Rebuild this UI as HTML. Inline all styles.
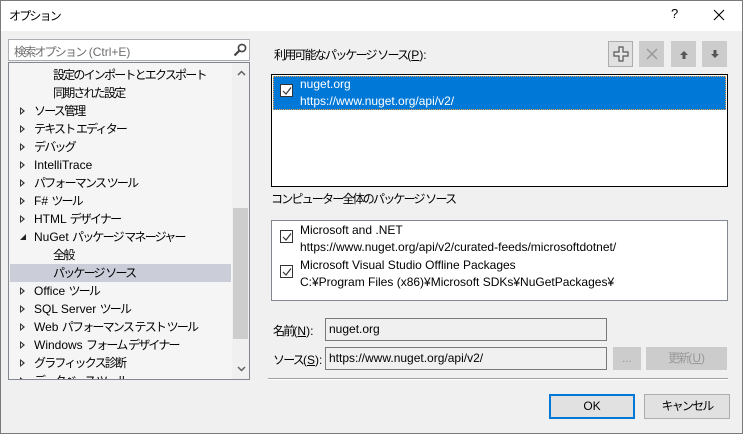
<!DOCTYPE html>
<html><head><meta charset="utf-8"><style>
*{box-sizing:border-box;margin:0;padding:0}
body{width:743px;height:434px;overflow:hidden;background:#f0f0f0;font-family:"Liberation Sans","Noto Sans CJK JP",sans-serif;font-size:12px;color:#000;position:relative}
.j{letter-spacing:-1.8px}
.win{position:absolute;left:0;top:0;width:743px;height:434px;border:1px solid #7a7a7a;border-top:none}
.title{position:absolute;left:0;top:0;width:743px;height:31px;background:#fff;border-top:1px solid #7a7a7a;border-left:1px solid #7a7a7a;border-right:1px solid #7a7a7a}
.abs{position:absolute;white-space:nowrap}
.box{position:absolute;border:1px solid #828790;background:#fff}
.tree{position:absolute;left:8px;top:62px;width:242px;height:318px;border:1px solid #828790;background:#f5f5f5;overflow:hidden}
.row{position:absolute;height:18px;line-height:18px;white-space:nowrap}
.tri{position:absolute;left:11px;top:5px;width:0;height:0;border-top:4px solid transparent;border-bottom:4px solid transparent;border-left:5px solid #333}
.tri:after{content:"";position:absolute;left:-4px;top:-2px;border-top:2px solid transparent;border-bottom:2px solid transparent;border-left:2px solid #f5f5f5}
.cb{position:absolute;width:13px;height:13px;border:1px solid #333;background:#fff}
.cb svg{position:absolute;left:1px;top:1px}
.btn{position:absolute;border:1px solid #adadad;background:#e1e1e1;text-align:center}
.tb{position:absolute;top:41px;width:25px;height:26px;background:#ccc;border:1px solid #ccc}
</style></head><body>
<div class="title"></div>
<div class="win"></div>
<div class="abs j" style="left:9px;top:7px;font-size:12px">オプション</div>
<div class="abs" style="left:671px;top:6px;font-size:13px">?</div>
<svg class="abs" style="left:713px;top:9px" width="12" height="12"><path d="M1 1L11 11M11 1L1 11" stroke="#000" stroke-width="1.1"/></svg>

<div class="box" style="left:8px;top:39px;width:242px;height:22px;border-color:#abadb3">
<span class="abs" style="left:5px;top:3px;color:#6d6d6d"><span class="j">検索オプション</span> (Ctrl+E)</span>
<svg class="abs" style="left:224px;top:3px" width="14" height="14"><circle cx="9" cy="5" r="3.6" fill="none" stroke="#444" stroke-width="1.6"/><path d="M6.5 7.5L1.5 12.5" stroke="#444" stroke-width="2.2"/></svg>
</div>

<div class="tree">
<div class="row" style="left:1px;top:201px;width:221px;background:#cbcdd9"></div>
<div class="row j" style="left:44px;top:3px">設定のインポートとエクスポート</div>
<div class="row j" style="left:44px;top:21px">同期された設定</div>
<div class="row" style="left:0;top:39px"><i class="tri"></i><span class="j" style="position:absolute;left:25px">ソース管理</span></div>
<div class="row" style="left:0;top:57px"><i class="tri"></i><span class="j" style="position:absolute;left:25px">テキスト エディター</span></div>
<div class="row" style="left:0;top:75px"><i class="tri"></i><span class="j" style="position:absolute;left:25px">デバッグ</span></div>
<div class="row" style="left:0;top:93px"><i class="tri"></i><span style="position:absolute;left:25px">IntelliTrace</span></div>
<div class="row" style="left:0;top:111px"><i class="tri"></i><span class="j" style="position:absolute;left:25px">パフォーマンス ツール</span></div>
<div class="row" style="left:0;top:129px"><i class="tri"></i><span style="position:absolute;left:25px">F# <span class="j">ツール</span></span></div>
<div class="row" style="left:0;top:147px"><i class="tri"></i><span style="position:absolute;left:25px">HTML <span class="j">デザイナー</span></span></div>
<div class="row" style="left:0;top:165px"><svg style="position:absolute;left:10px;top:5px" width="8" height="8"><path d="M7 1L7 7L1 7Z" fill="#222"/></svg><span style="position:absolute;left:25px">NuGet <span class="j">パッケージ マネージャー</span></span></div>
<div class="row j" style="left:44px;top:183px">全般</div>
<div class="row j" style="left:44px;top:201px">パッケージ ソース</div>
<div class="row" style="left:0;top:219px"><i class="tri"></i><span style="position:absolute;left:25px">Office <span class="j">ツール</span></span></div>
<div class="row" style="left:0;top:237px"><i class="tri"></i><span style="position:absolute;left:25px">SQL Server <span class="j">ツール</span></span></div>
<div class="row" style="left:0;top:255px"><i class="tri"></i><span style="position:absolute;left:25px">Web <span class="j">パフォーマンス テスト ツール</span></span></div>
<div class="row" style="left:0;top:273px"><i class="tri"></i><span style="position:absolute;left:25px">Windows <span class="j">フォーム デザイナー</span></span></div>
<div class="row" style="left:0;top:291px"><i class="tri"></i><span class="j" style="position:absolute;left:25px">グラフィックス診断</span></div>
<div class="row" style="left:0;top:309px"><i class="tri"></i><span class="j" style="position:absolute;left:25px">データベース ツール</span></div>
<div style="position:absolute;left:223px;top:0;width:17px;height:316px;background:#f0f0f0"></div>
<div style="position:absolute;left:224px;top:145px;width:15px;height:131px;background:#cdcdcd"></div>
<svg style="position:absolute;left:228px;top:7px" width="9" height="6"><path d="M1 5L4.5 1.5L8 5" fill="none" stroke="#606060" stroke-width="1.5"/></svg>
<svg style="position:absolute;left:228px;top:303px" width="9" height="6"><path d="M1 1L4.5 4.5L8 1" fill="none" stroke="#606060" stroke-width="1.5"/></svg>
</div>

<div class="abs" style="left:274px;top:46px"><span class="j">利用可能なパッケージ ソース</span>(<u>P</u>):</div>
<div class="tb" style="left:608px;background:#e1e1e1;border-color:#adadad"><svg style="position:absolute;left:3px;top:3px" width="18" height="18"><path d="M7 2H11V7H16V11H11V16H7V11H2V7H7Z" fill="#e8e8e8" stroke="#555" stroke-width="1.2"/></svg></div>
<div class="tb" style="left:639px"><svg style="position:absolute;left:5px;top:5px" width="14" height="14"><path d="M2 2L12 12M12 2L2 12" stroke="#999" stroke-width="1.5"/></svg></div>
<div class="tb" style="left:671px"><svg style="position:absolute;left:7px;top:8px" width="10" height="10"><path d="M5 1L9 5H6.5V9H3.5V5H1Z" fill="#555"/></svg></div>
<div class="tb" style="left:702px"><svg style="position:absolute;left:7px;top:7px" width="10" height="10"><path d="M5 9L9 5H6.5V1H3.5V5H1Z" fill="#555"/></svg></div>

<div class="box" style="left:271px;top:74px;width:457px;height:113px;border-color:#000">
<div style="position:absolute;left:1px;top:1px;width:453px;height:34px;background:#0078d7;border:1px dotted #f0a040"></div>
<div class="cb" style="left:8px;top:9px"><svg width="10" height="10"><path d="M1 5L4 8L9 1.5" fill="none" stroke="#333" stroke-width="1.2"/></svg></div>
<div class="abs" style="left:28px;top:2px;color:#fff">nuget.org</div>
<div class="abs" style="left:28px;top:19px;color:#fff">https://www.nuget.org/api/v2/</div>
</div>
<div class="abs j" style="left:271px;top:190px">コンピューター全体のパッケージ ソース</div>

<div class="box" style="left:271px;top:220px;width:457px;height:81px;border-color:#828790">
<div class="cb" style="left:8px;top:9px"><svg width="10" height="10"><path d="M1 5L4 8L9 1.5" fill="none" stroke="#333" stroke-width="1.2"/></svg></div>
<div class="abs" style="left:28px;top:2px">Microsoft and .NET</div>
<div class="abs" style="left:28px;top:19px">https://www.nuget.org/api/v2/curated-feeds/microsoftdotnet/</div>
<div class="cb" style="left:8px;top:44px"><svg width="10" height="10"><path d="M1 5L4 8L9 1.5" fill="none" stroke="#333" stroke-width="1.2"/></svg></div>
<div class="abs" style="left:28px;top:37px">Microsoft Visual Studio Offline Packages</div>
<div class="abs" style="left:28px;top:54px">C:¥Program Files (x86)¥Microsoft SDKs¥NuGetPackages¥</div>
</div>

<div class="abs" style="left:273px;top:322px"><span class="j">名前</span>(<u>N</u>):</div>
<div class="box" style="left:325px;top:318px;width:282px;height:23px;background:#f0f0f0;border-color:#7a7a7a"><span class="abs" style="left:3px;top:3px">nuget.org</span></div>
<div class="abs" style="left:273px;top:351px"><span class="j">ソース</span>(<u>S</u>):</div>
<div class="box" style="left:325px;top:347px;width:282px;height:23px;background:#f0f0f0;border-color:#7a7a7a"><span class="abs" style="left:3px;top:3px">https://www.nuget.org/api/v2/</span></div>
<div class="btn" style="left:613px;top:347px;width:28px;height:23px;background:#ccc;border-color:#ccc;color:#999;line-height:20px">...</div>
<div class="btn" style="left:646px;top:347px;width:81px;height:23px;background:#ccc;border-color:#ccc;color:#999;line-height:20px"><span class="j">更新</span>(<u>U</u>)</div>
<div style="position:absolute;left:268px;top:378px;width:460px;height:1px;background:#a0a0a0"></div>
<div style="position:absolute;left:268px;top:379px;width:460px;height:1px;background:#fff"></div>

<div class="btn" style="left:549px;top:394px;width:86px;height:25px;border:2px solid #0078d7;line-height:21px">OK</div>
<div class="btn j" style="left:644px;top:394px;width:86px;height:25px;line-height:23px">キャンセル</div>
</body></html>
